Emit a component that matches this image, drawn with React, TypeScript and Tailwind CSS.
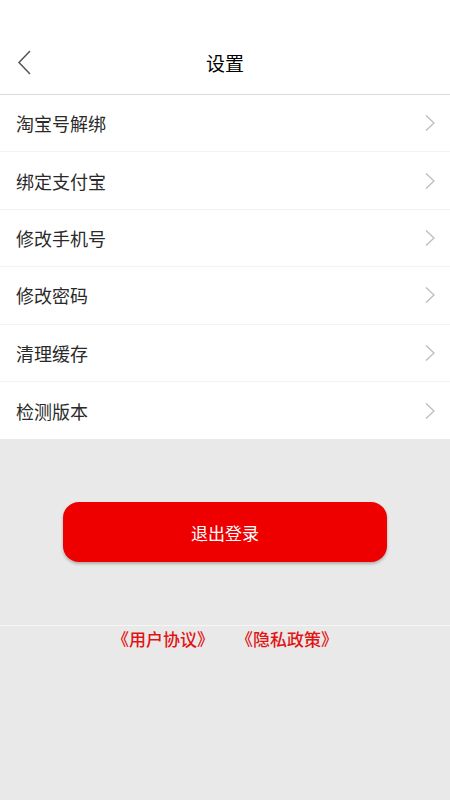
const items = ["淘宝号解绑", "绑定支付宝", "修改手机号", "修改密码", "清理缓存", "检测版本"];

function Chevron() {
  return (
    <svg width="12" height="18" viewBox="0 0 12 18" fill="none">
      <path d="M2 1.5 L10 9 L2 16.5" stroke="#bdbdbd" strokeWidth="1.3" />
    </svg>
  );
}

export default function App() {
  return (
    <div className="min-h-[800px] bg-[#e9e9e9] font-['Noto_Sans_CJK_SC',sans-serif]">
      <header className="relative h-[95px] bg-white border-b border-[#d9d9d9] flex items-end">
        <div className="w-full h-[62px] flex items-center justify-center relative pb-[2px]">
          <span className="absolute left-[16px] top-[17px]">
            <svg width="18" height="28" viewBox="0 0 18 28" fill="none">
              <path d="M14 2 L3 13.5 L14 25" stroke="#555" strokeWidth="1.5" />
            </svg>
          </span>
          <h1 className="text-[19px] text-[#000] leading-none">设置</h1>
        </div>
      </header>
      <ul className="bg-white">
        {items.map((item, i) => (
          <li
            key={item}
            className={`h-[57.4px] flex items-center justify-between pl-[16px] pr-[14px] ${
              i < items.length - 1 ? "border-b border-[#f3f3f3]" : ""
            }`}
          >
            <span className="text-[18px] text-[#2a2a2a] leading-none">{item}</span>
            <Chevron />
          </li>
        ))}
      </ul>
      <div className="pt-[63px] px-[63px]">
        <button className="w-full h-[60px] rounded-[16px] bg-[#ee0000] text-white text-[17px] shadow-[0_2px_3px_rgba(0,0,0,0.25)]">
          退出登录
        </button>
      </div>
      <div className="mt-[63px] border-t border-[#f6f6f6] flex justify-center gap-[22px] pt-[1px] text-[17px] font-medium text-[#e11414] leading-[24px]">
        <span>《用户协议》</span>
        <span>《隐私政策》</span>
      </div>
    </div>
  );
}
